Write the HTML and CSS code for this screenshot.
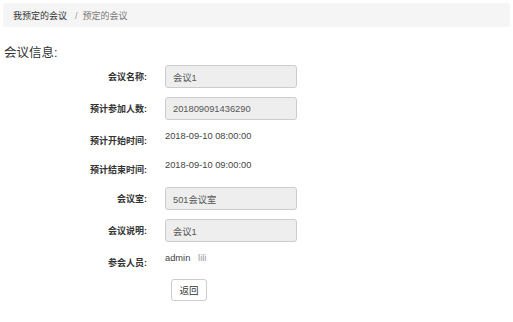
FILE: index.html
```html
<!DOCTYPE html>
<html lang="zh-CN">
  <head>
    <meta charset="UTF-8" />
    <meta name="viewport" content="width=device-width, initial-scale=1.0" />
    <title>预定的会议</title>
    <link rel="stylesheet" href="styles.css">
  </head>
  <body>
    <ol class="breadcrumb">
      <li><a href="#">我预定的会议</a></li>
      <li class="active">预定的会议</li>
    </ol>

    <h3 class="title">会议信息:</h3>

    <form class="form">
      <div class="row">
        <label>会议名称:</label>
        <input type="text" class="field" value="会议1" readonly />
      </div>
      <div class="row">
        <label>预计参加人数:</label>
        <input type="text" class="field" value="201809091436290" readonly />
      </div>
      <div class="row static">
        <label>预计开始时间:</label>
        <p class="value">2018-09-10 08:00:00</p>
      </div>
      <div class="row static">
        <label>预计结束时间:</label>
        <p class="value">2018-09-10 09:00:00</p>
      </div>
      <div class="row">
        <label>会议室:</label>
        <input type="text" class="field" value="501会议室" readonly />
      </div>
      <div class="row">
        <label>会议说明:</label>
        <input type="text" class="field" value="会议1" readonly />
      </div>
      <div class="row static">
        <label>参会人员:</label>
        <p class="value">admin&nbsp;&nbsp;&nbsp;<span class="name">lili</span></p>
      </div>
      <button type="button" class="btn">返回</button>
    </form>
  </body>
</html>
```

FILE: styles.css
```css
body {
  margin: 0;
  padding: 3px;
  font-family: "Liberation Sans", "Noto Sans CJK SC", sans-serif;
  color: #333;
  background: #fff;
}
.breadcrumb {
  list-style: none;
  margin: 0;
  padding: 0 10px;
  height: 24px;
  display: flex;
  align-items: center;
  background: #f5f5f5;
  border-radius: 3px;
  font-size: 9px;
}
.breadcrumb a {
  color: #333;
  text-decoration: none;
}
.breadcrumb li + li::before {
  content: "/";
  padding: 0 5px 0 8px;
  color: #999;
}
.breadcrumb .active {
  color: #777;
}
.title {
  margin: 18px 0 0 1px;
  font-size: 12.5px;
  font-weight: normal;
  line-height: 16px;
  color: #333;
}
.form {
  margin-top: 4px;
}
.row {
  display: grid;
  grid-template-columns: 144px 132px;
  column-gap: 18px;
  align-items: center;
  margin-bottom: 9px;
}
.row label {
  text-align: right;
  font-size: 9px;
  font-weight: bold;
  line-height: 22px;
}
.field {
  box-sizing: border-box;
  height: 23px;
  padding: 0 7px;
  font-family: "Liberation Sans", "Noto Sans CJK SC", sans-serif;
  font-size: 9.3px;
  color: #555;
  background: #eee;
  border: 1px solid #ccc;
  border-radius: 3px;
}
.static {
  align-items: start;
  margin-bottom: 6px;
}
.static label {
  padding-top: 1px;
}
.value {
  margin: 0;
  font-size: 9.3px;
  line-height: 14px;
  color: #444;
}
.value .name {
  color: #999;
}
.btn {
  margin-top: -2px;
  margin-left: 168px;
  width: 36px;
  height: 22px;
  padding: 0;
  font-family: "Liberation Sans", "Noto Sans CJK SC", sans-serif;
  font-size: 9.5px;
  color: #333;
  background: #fff;
  border: 1px solid #ccc;
  border-radius: 3px;
}
```
